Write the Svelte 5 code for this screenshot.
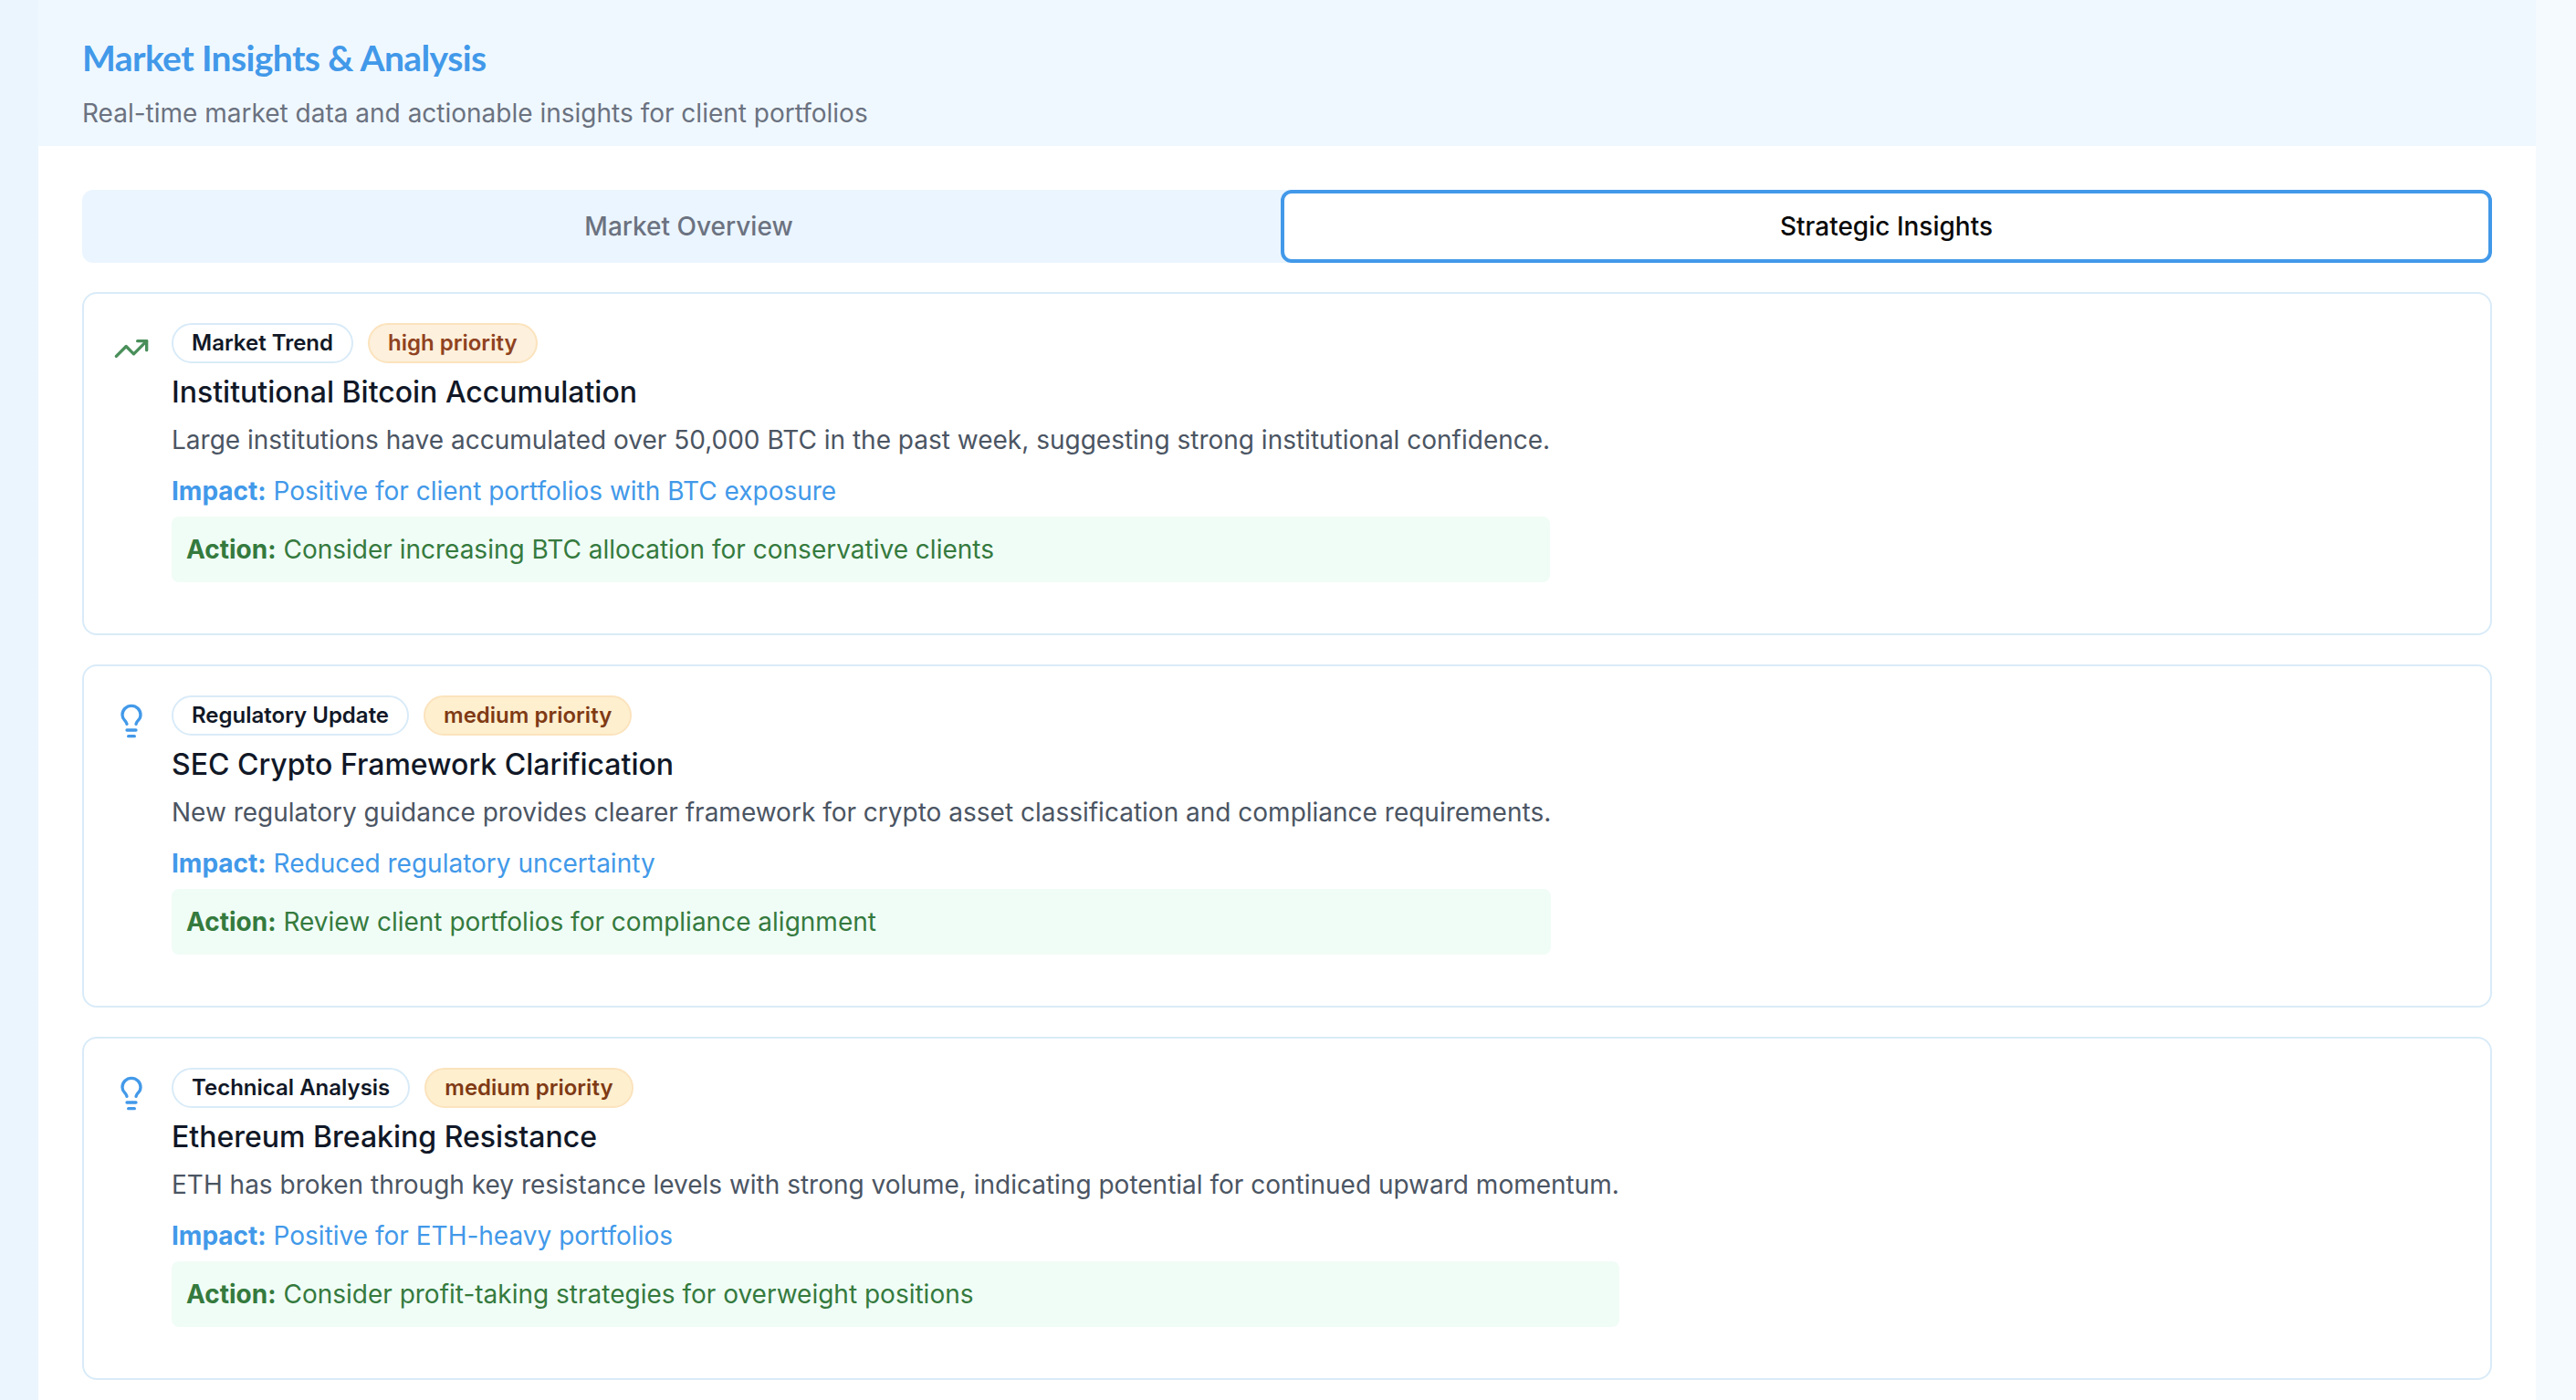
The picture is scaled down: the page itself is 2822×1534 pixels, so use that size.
<script>
  const insights = [
    {
      icon: 'trend',
      category: 'Market Trend',
      priority: 'high',
      title: 'Institutional Bitcoin Accumulation',
      text: 'Large institutions have accumulated over 50,000 BTC in the past week, suggesting strong institutional confidence.',
      impact: 'Positive for client portfolios with BTC exposure',
      action: 'Consider increasing BTC allocation for conservative clients'
    },
    {
      icon: 'bulb',
      category: 'Regulatory Update',
      priority: 'medium',
      title: 'SEC Crypto Framework Clarification',
      text: 'New regulatory guidance provides clearer framework for crypto asset classification and compliance requirements.',
      impact: 'Reduced regulatory uncertainty',
      action: 'Review client portfolios for compliance alignment'
    },
    {
      icon: 'bulb',
      category: 'Technical Analysis',
      priority: 'medium',
      title: 'Ethereum Breaking Resistance',
      text: 'ETH has broken through key resistance levels with strong volume, indicating potential for continued upward momentum.',
      impact: 'Positive for ETH-heavy portfolios',
      action: 'Consider profit-taking strategies for overweight positions'
    }
  ]
</script>

<div class="page">
  <div class="panel">
    <header class="head">
      <h1>Market Insights &amp; Analysis</h1>
      <p>Real-time market data and actionable insights for client portfolios</p>
    </header>
    <div class="body">
      <div class="tabs">
        <button class="tab">Market Overview</button>
        <button class="tab active">Strategic Insights</button>
      </div>
      {#each insights as item}
        <article class="card">
          <div class="icon">
            {#if item.icon === 'trend'}
              <svg class="trend" width="40" height="40" viewBox="0 0 24 24" fill="none" stroke="currentColor" stroke-width="2" stroke-linecap="round" stroke-linejoin="round">
                <polyline points="22 7 13.5 15.5 8.5 10.5 2 17" />
                <polyline points="16 7 22 7 22 13" />
              </svg>
            {:else}
              <svg class="bulb" width="40" height="40" viewBox="0 0 24 24" fill="none" stroke="currentColor" stroke-width="2" stroke-linecap="round" stroke-linejoin="round">
                <path d="M15 14c.2-1 .7-1.7 1.5-2.5 1-.9 1.5-2.2 1.5-3.5A6 6 0 0 0 6 8c0 1 .2 2.2 1.5 3.5.7.7 1.3 1.5 1.5 2.5" />
                <path d="M9 18h6" />
                <path d="M10 22h4" />
              </svg>
            {/if}
          </div>
          <div class="main">
            <div class="badges">
              <span class="badge">{item.category}</span>
              <span class="badge {item.priority}">{item.priority} priority</span>
            </div>
            <h2>{item.title}</h2>
            <p class="text">{item.text}</p>
            <p class="impact"><b>Impact:</b> {item.impact}</p>
            <p class="action"><b>Action:</b> {item.action}</p>
          </div>
        </article>
      {/each}
    </div>
  </div>
</div>

<style>
  :global(body) {
    margin: 0;
    font-family: Inter, "Liberation Sans", sans-serif;
    background: linear-gradient(90deg, #ebf5fe, #f5faff);
  }

  .page {
    padding: 0 44px 0 42px;
    height: 1534px;
    overflow: hidden;
  }

  .panel {
    background: #fff;
    min-height: 1534px;
  }

  .head {
    height: 160px;
    box-sizing: border-box;
    padding: 36px 48px 0;
    background: #f0f8ff;
  }

  h1 {
    margin: 0;
    font: 700 39px/54px Lato, sans-serif;
    letter-spacing: -0.6px;
    color: #4299e9;
  }

  .head p {
    margin: 14px 0 0;
    font-size: 28px;
    line-height: 40px;
    color: #6b7280;
  }

  .body {
    padding: 48px;
  }

  .tabs {
    display: grid;
    grid-template-columns: 1313fr 1327fr;
    height: 80px;
    margin-bottom: 32px;
    background: #ebf5ff;
    border-radius: 12px;
  }

  .tab {
    border: 0;
    background: transparent;
    font: 500 28px Inter, sans-serif;
    color: #6b7280;
    border-radius: 12px;
    padding: 0 0 0 16px;
  }

  .tab.active {
    background: #fff;
    border: 4px solid #4299e9;
    color: #0a0a0a;
    padding: 0;
  }

  .card {
    display: flex;
    gap: 24px;
    margin-bottom: 32px;
    padding: 32px 32px 56px;
    border: 2px solid #d9ebf8;
    border-radius: 16px;
  }

  .icon {
    flex: none;
    width: 40px;
    padding-top: 8px;
  }

  .trend { color: #4a8f5a; }
  .bulb { color: #4299e9; }

  .main {
    display: flex;
    flex-direction: column;
    align-items: flex-start;
    width: max-content;
  }

  .badges {
    display: flex;
    gap: 16px;
  }

  .badge {
    box-sizing: border-box;
    height: 44px;
    padding: 0 20px;
    border: 2px solid #d9ebf8;
    border-radius: 22px;
    font-size: 24px;
    font-weight: 600;
    line-height: 40px;
    color: #111827;
  }

  .badge.high,
  .badge.medium {
    background: #fdf0dc;
    border-color: #fbe3bd;
    color: #8f4220;
  }

  .badge.medium {
    background: #feefcf;
    color: #7f3a14;
  }

  h2 {
    margin: 8px 0 0;
    font-size: 32px;
    font-weight: 500;
    line-height: 48px;
    color: #111827;
  }

  .text {
    margin: 8px 0 0;
    font-size: 28px;
    line-height: 40px;
    color: #4b5563;
  }

  .impact {
    margin: 16px 0 0;
    font-size: 28px;
    line-height: 40px;
    color: #4299e9;
  }

  .action {
    box-sizing: border-box;
    align-self: stretch;
    margin: 8px 0 0;
    padding: 16px;
    background: #f0fdf6;
    border-radius: 8px;
    font-size: 28px;
    line-height: 40px;
    color: #357a3e;
  }

  b { font-weight: 700; }
</style>
